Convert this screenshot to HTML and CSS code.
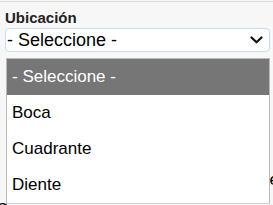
FILE: index.html
```html
<!DOCTYPE html>
<html lang="es">
<head>
    <meta charset="UTF-8">
    <title>Ubicación</title>
    <link rel="stylesheet" href="styles.css">
</head>
<body>
    <div class="panel">
        <div class="field">
            <label class="field-label">Ubicación</label>
            <div class="select">
                <span>- Seleccione -</span>
                <svg class="chevron" width="13" height="8" viewBox="0 0 13 8">
                    <path d="M1.5 1.5 L6.5 6.3 L11.5 1.5" fill="none" stroke="#111" stroke-width="2.2" stroke-linecap="round" stroke-linejoin="round"/>
                </svg>
            </div>
            <ul class="options">
                <li class="option selected">- Seleccione -</li>
                <li class="option">Boca</li>
                <li class="option">Cuadrante</li>
                <li class="option">Diente</li>
            </ul>
        </div>
        <div class="under-right"><span>Paciente</span></div>
        <div class="under-left">C</div>
    </div>
</body>
</html>
```

FILE: styles.css
```css
html, body {
    margin: 0;
    padding: 0;
}

body {
    padding-top: 1px;
    background-color: #f7f7f7;
    font-family: "Liberation Sans", Arial, sans-serif;
    color: #000;
    overflow: hidden;
    height: 205px;
}

.panel {
    position: relative;
    border-top: 1px solid #dedede;
    padding: 7px 3px 0 5px;
}

.field {
    position: relative;
    z-index: 5;
}

.field-label {
    display: block;
    font-size: 15px;
    font-weight: bold;
    line-height: 17px;
    color: #222;
    margin-bottom: 2px;
}

.select {
    box-sizing: border-box;
    height: 24px;
    display: flex;
    align-items: center;
    justify-content: space-between;
    background-color: #fff;
    border: 1px solid #c8dcee;
    border-radius: 4px;
    padding: 0 6px 0 1px;
    font-size: 18px;
    line-height: 20px;
}

.chevron {
    display: block;
}

.options {
    position: absolute;
    top: 49px;
    left: 1px;
    width: 264px;
    box-sizing: border-box;
    margin: 0;
    padding: 0;
    list-style: none;
    background-color: #fff;
    border: 1px solid #b9b9b9;
    border-bottom-color: #d0d0d0;
}

.option {
    height: 36px;
    line-height: 36px;
    padding-left: 5px;
    font-size: 17px;
    color: #000;
}

.option.selected {
    background-color: #767676;
    color: #fff;
}

.under-right {
    display: flex;
    justify-content: flex-end;
    margin-top: 118px;
    margin-right: -9px;
    font-size: 17px;
    line-height: 20px;
}

.under-left {
    margin-top: 10px;
    margin-left: -9px;
    font-size: 17px;
    line-height: 20px;
}
```
